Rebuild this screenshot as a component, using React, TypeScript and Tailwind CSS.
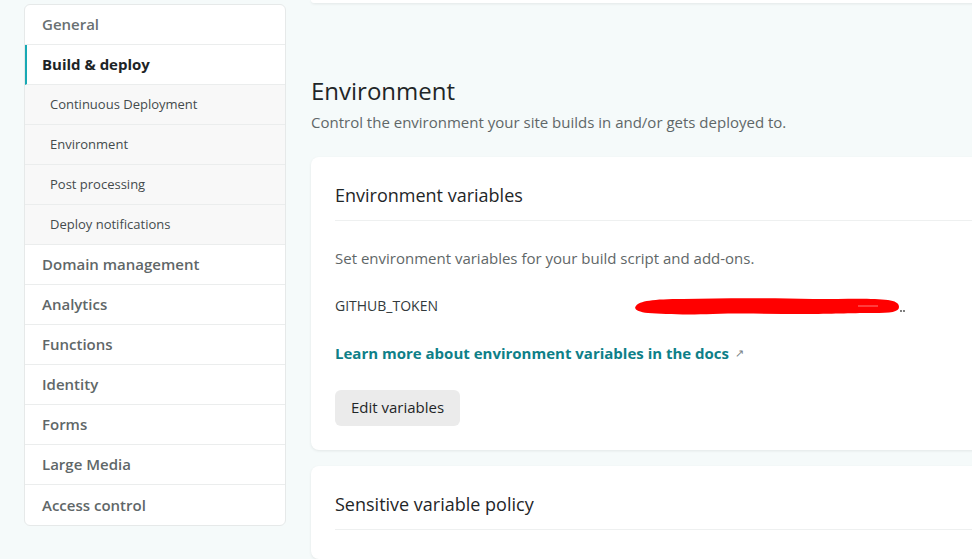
import React from "react";

const mainItems = [
  "Domain management",
  "Analytics",
  "Functions",
  "Identity",
  "Forms",
  "Large Media",
  "Access control",
];
const subItems = ["Continuous Deployment", "Environment", "Post processing", "Deploy notifications"];

function Redaction() {
  return (
    <svg width="275" height="24" viewBox="0 0 275 24" className="block">
      <path
        d="M3 12 C6 7, 20 5, 50 5 C90 4, 140 4, 180 5 C215 5, 240 4, 255 6 C262 7, 266 9, 266 13 C266 18, 258 19, 240 19 C215 19, 200 20, 170 20 C140 20, 110 19, 80 20 C50 21, 30 20, 15 19 C5 18, 0 15, 3 12 Z"
        fill="#ff0000"
      />
      <path d="M225 12 L245 12" stroke="#ffffff" strokeWidth="0.8" opacity="0.6" />
      <circle cx="268" cy="17" r="0.9" fill="#444" />
      <circle cx="271" cy="17" r="0.9" fill="#444" />
    </svg>
  );
}

export default function App() {
  return (
    <div
      className="w-[972px] h-[559px] overflow-hidden bg-[#f5fafa] flex gap-[25px] pl-[24px]"
      style={{ fontFamily: '"Open Sans", "Noto Sans", sans-serif' }}
    >
      <aside className="w-[262px] shrink-0 pt-[4px]">
        <nav className="bg-white border border-[#e6e9e9] rounded-[6px] overflow-hidden">
          <div className="h-[40px] flex items-center pl-[17px] text-[15px] font-semibold text-[#697072] border-b border-[#ebeded]">
            General
          </div>
          <div className="h-[40px] flex items-center pl-[15px] text-[15px] font-bold text-[#1d2426] border-l-[2px] border-l-[#18a9b4] border-b border-b-[#ebeded]">
            Build &amp; deploy
          </div>
          {subItems.map((s) => (
            <div
              key={s}
              className="h-[40px] flex items-center pl-[25px] text-[13px] font-medium text-[#444b4d] bg-[#f8f8f8] border-b border-[#ebeded]"
            >
              {s}
            </div>
          ))}
          {mainItems.map((s, i) => (
            <div
              key={s}
              className={`h-[40px] flex items-center pl-[17px] text-[15px] font-semibold text-[#5f6768] ${
                i < mainItems.length - 1 ? "border-b border-[#ebeded]" : ""
              }`}
            >
              {s}
            </div>
          ))}
        </nav>
      </aside>

      <main className="w-[700px] shrink-0 flex flex-col">
        <div className="h-[7px] bg-white rounded-b-[8px] shadow-[0_1px_3px_rgba(0,0,0,0.08)]" />

        <h2 className="mt-[72px] text-[24px] leading-[32px] font-medium text-[#1f2628]">Environment</h2>
        <p className="mt-[4px] text-[15px] leading-[22px] text-[#5f6768]">
          Control the environment your site builds in and/or gets deployed to.
        </p>

        <section className="mt-[24px] bg-white rounded-[8px] shadow-[0_1px_3px_rgba(0,0,0,0.08)] pt-[25px] pb-[24px] px-[24px]">
          <h3 className="text-[18px] leading-[26px] font-medium text-[#1f2628] pb-[12px] border-b border-[#eef0f0]">
            Environment variables
          </h3>
          <p className="mt-[26px] text-[15px] leading-[22px] text-[#5f6768]">
            Set environment variables for your build script and add-ons.
          </p>
          <div className="mt-[26px] flex items-center h-[22px]">
            <span className="w-[298px] text-[14px] text-[#333a3c]">GITHUB_TOKEN</span>
            <Redaction />
          </div>
          <div className="mt-[26px] flex items-center gap-[6px] h-[22px]">
            <a className="text-[15px] font-bold text-[#0e7f88]">Learn more about environment variables in the docs</a>
            <span className="text-[11px] text-[#7a8284]">↗</span>
          </div>
          <button className="mt-[25px] h-[36px] px-[16px] rounded-[6px] bg-[#ebebeb] text-[15px] font-medium text-[#1f2628]">
            Edit variables
          </button>
        </section>

        <section className="mt-[16px] bg-white rounded-[8px] shadow-[0_1px_3px_rgba(0,0,0,0.08)] pt-[25px] px-[24px] h-[200px]">
          <h3 className="text-[18px] leading-[26px] font-medium text-[#1f2628] pb-[12px] border-b border-[#eef0f0]">
            Sensitive variable policy
          </h3>
        </section>
      </main>
    </div>
  );
}
